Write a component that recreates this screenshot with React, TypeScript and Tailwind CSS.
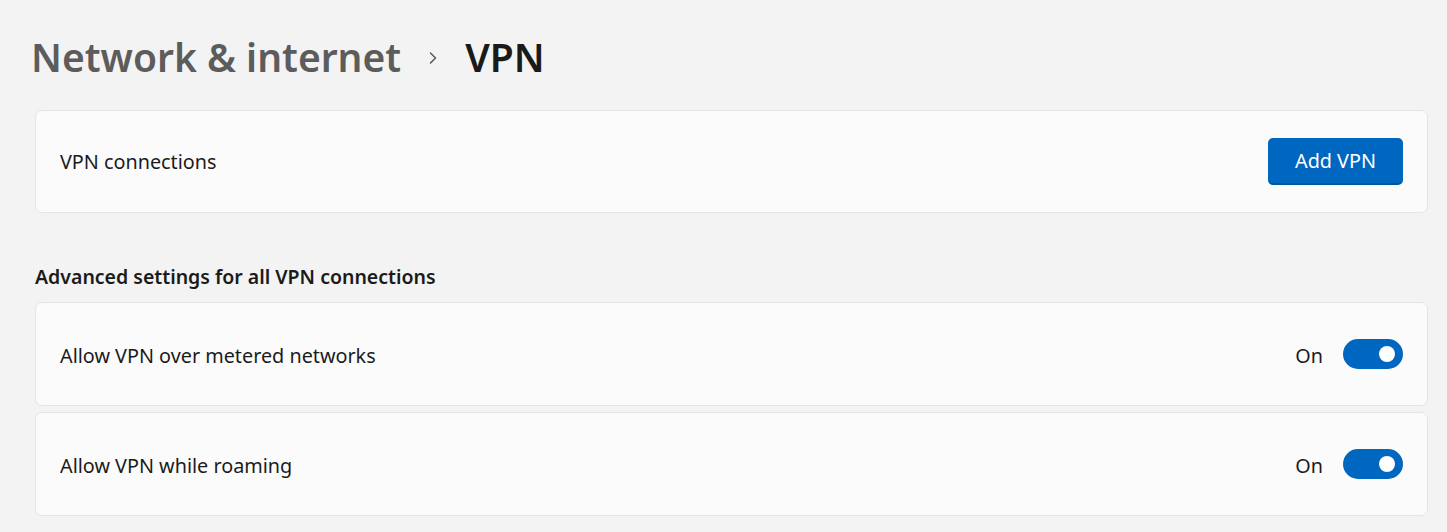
import React from 'react';

function Toggle() {
  return (
    <div className="flex h-[30px] w-[60px] items-center justify-end rounded-full bg-[#0067c0] pr-[8px]">
      <div className="h-[16px] w-[16px] rounded-full bg-white" />
    </div>
  );
}

function Card({ children, className = '' }: { children: React.ReactNode; className?: string }) {
  return (
    <div
      className={`flex items-center justify-between rounded-[7px] border border-[#e5e5e5] bg-[#fbfbfb] pl-[24px] pr-[24px] ${className}`}
    >
      {children}
    </div>
  );
}

function ToggleRow({ label }: { label: string }) {
  return (
    <Card className="h-[104px]">
      <span className="pt-[3px] text-[19.8px] text-[#1b1b1b]">{label}</span>
      <div className="flex items-center gap-[20px]">
        <span className="pt-[3px] text-[19.8px] text-[#1b1b1b]">On</span>
        <Toggle />
      </div>
    </Card>
  );
}

export default function App() {
  return (
    <div
      className="h-[532px] w-[1447px] overflow-hidden bg-[#f3f3f3] pl-[35px] pr-[19px]"
      style={{ fontFamily: '"Noto Sans", "Open Sans", sans-serif' }}
    >
      <div className="flex h-[110px] items-center pt-[2px]">
        <h1 className="-ml-[4px] flex items-center text-[39px] font-semibold leading-none">
          <span className="text-[#5c5c5c]">Network &amp; internet</span>
          <svg className="mx-[24px] mt-[4px] h-[16px] w-[16px]" viewBox="0 0 16 16" fill="none">
            <path d="M5.5 3 L10.5 8 L5.5 13" stroke="#5c5c5c" strokeWidth="1.6" strokeLinecap="round" strokeLinejoin="round" />
          </svg>
          <span className="text-[#1a1a1a]">VPN</span>
        </h1>
      </div>

      <Card className="h-[103px]">
        <span className="text-[19.8px] text-[#1b1b1b]">VPN connections</span>
        <button className="h-[47px] w-[135px] rounded-[5px] border-b-[2px] border-[#00569f] bg-[#0067c0] text-[19.8px] text-white">
          Add VPN
        </button>
      </Card>

      <div className="flex h-[89px] items-end pb-[11px]">
        <h2 className="text-[19.5px] font-semibold text-[#1b1b1b]">Advanced settings for all VPN connections</h2>
      </div>

      <div className="flex flex-col gap-[6px]">
        <ToggleRow label="Allow VPN over metered networks" />
        <ToggleRow label="Allow VPN while roaming" />
      </div>
    </div>
  );
}
